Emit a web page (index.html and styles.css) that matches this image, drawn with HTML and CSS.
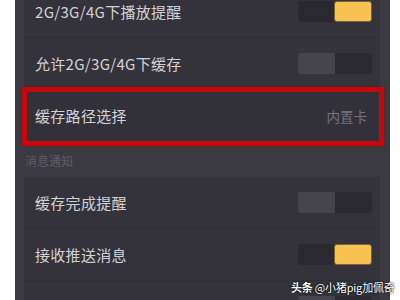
FILE: index.html
```html
<!DOCTYPE html>
<html lang="zh">
<head>
<meta charset="UTF-8" />
<title>设置</title>
<link rel="stylesheet" href="styles.css">
</head>
<body>
  <div class="screen">
    <div class="card first">
      <div class="row">
        <span class="label">2G/3G/4G下播放提醒</span>
        <span class="toggle on"><i></i><i></i></span>
      </div>
      <div class="row">
        <span class="label">允许2G/3G/4G下缓存</span>
        <span class="toggle"><i></i><i></i></span>
      </div>
      <div class="row marked">
        <span class="label">缓存路径选择</span>
        <span class="value">内置卡</span>
      </div>
    </div>

    <div class="section">消息通知</div>

    <div class="card">
      <div class="row">
        <span class="label">缓存完成提醒</span>
        <span class="toggle"><i></i><i></i></span>
      </div>
      <div class="row">
        <span class="label">接收推送消息</span>
        <span class="toggle on"><i></i><i></i></span>
      </div>
      <div class="row">
        <span class="label">&nbsp;</span>
        <span class="toggle"><i></i><i></i></span>
      </div>
    </div>
  </div>

  <div class="watermark"><b>头条</b> @小猪pig加佩奇</div>
</body>
</html>
```

FILE: styles.css
```css
body, html {
  margin: 0;
  padding: 0;
  background: #ffffff;
  font-family: "Noto Sans CJK SC", "Noto Sans", sans-serif;
}

.screen {
  margin-left: 15px;
  width: 375px;
  height: 300px;
  background: #3b3a42;
  overflow: hidden;
  padding-left: 9px;
  box-sizing: border-box;
}

.card {
  width: 356px;
  background: #34333b;
}
.card.first {
  margin-top: -14px;
}

.row {
  height: 51px;
  display: flex;
  align-items: center;
  justify-content: space-between;
  padding: 0 8px 0 11px;
  border-bottom: 1px solid #2f2e35;
  position: relative;
}

.label {
  font-size: 15px;
  color: #d2d1d6;
  letter-spacing: 0.3px;
}

.value {
  font-size: 13.5px;
  color: #76757c;
  margin-right: 5px;
}

.toggle {
  display: flex;
  width: 74px;
  height: 21px;
  border-radius: 3px;
  overflow: hidden;
}
.toggle i {
  flex: 1;
  background: #2b2a31;
}
.toggle i:first-child {
  background: #46454d;
}
.toggle.on i:first-child {
  background: #2a292f;
}
.toggle.on i:last-child {
  background: #f8c253;
  border: 1px solid #7d6330;
  border-radius: 3px;
}

.marked {
  background: #323139;
}
.marked::after {
  content: "";
  position: absolute;
  top: -3px;
  bottom: -5px;
  left: -2px;
  right: -4px;
  border: 5px solid #c4080b;
  box-shadow: 0 0 2px #6a1015;
}

.section {
  height: 35px;
  line-height: 38px;
  padding-left: 1px;
  font-size: 12px;
  color: #5f5e66;
}

.watermark {
  position: absolute;
  left: 291px;
  top: 279px;
  white-space: nowrap;
  font-size: 11px;
  letter-spacing: -0.2px;
  color: #ffffff;
  text-shadow: 0 0 2px #000, 0 0 1px #000;
}
.watermark b {
  font-weight: 700;
}
```
